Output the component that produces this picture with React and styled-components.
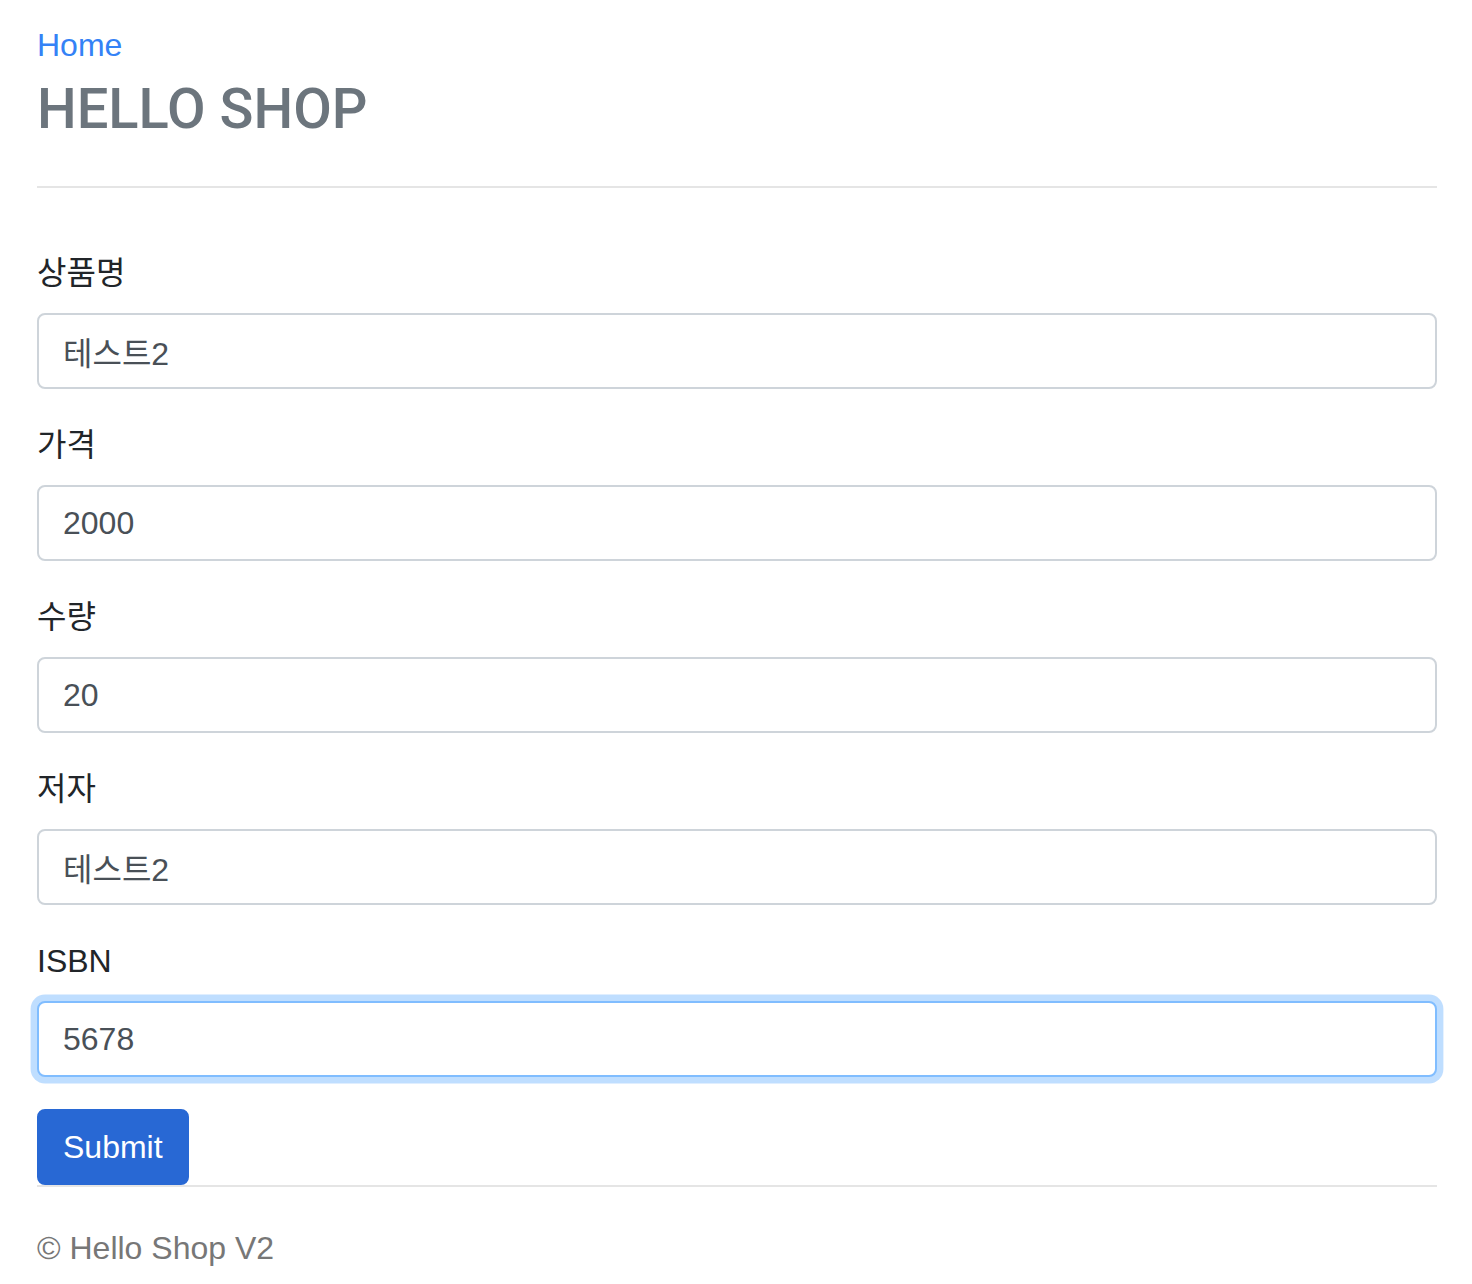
import React, { useEffect, useRef } from "react";
import styled, { createGlobalStyle, css } from "styled-components";

const GlobalStyle = createGlobalStyle`
  html, body {
    margin: 0;
    padding: 0;
    background: #ffffff;
  }
  body {
    font-family: "Liberation Sans", "Noto Sans CJK KR", sans-serif;
    font-size: 32px;
    line-height: 48px;
    color: #212529;
  }
  * { box-sizing: border-box; }
`;

const Container = styled.div`
  width: 1400px;
  margin-left: 37px;
  padding-top: 21px;
  padding-bottom: 10px;
`;

const Header = styled.header`
  display: flex;
  flex-direction: column;
  align-items: flex-start;
`;

const HomeLink = styled.a`
  display: block;
  color: #3482f6;
  text-decoration: none;
  font-size: 32px;
  line-height: 48px;
`;

const Title = styled.h3`
  margin: 7px 0 0;
  font-family: Roboto, "Liberation Sans", sans-serif;
  font-size: 56px;
  line-height: 67px;
  font-weight: 500;
  color: #6c757d;
`;

const Rule = styled.hr`
  border: 0;
  border-top: 2px solid #e5e5e5;
  margin: ${(p) => p.$top}px 0 0;
  height: 0;
`;

const Form = styled.form`
  display: flex;
  flex-direction: column;
  align-items: flex-start;
  margin-top: 61px;
`;

const Group = styled.div`
  display: flex;
  flex-direction: column;
  width: 100%;
  margin-bottom: 32px;
`;

const Label = styled.label`
  display: block;
  font-size: 32px;
  line-height: 48px;
  margin-bottom: 16px;
  color: #212529;
`;

const Input = styled.input`
  display: block;
  width: 100%;
  height: 76px;
  padding: 12px 24px;
  font-family: "Liberation Sans", "Noto Sans CJK KR", sans-serif;
  font-size: 32px;
  line-height: 48px;
  color: #495057;
  background: #ffffff;
  border: 2px solid #ced4da;
  border-radius: 8px;
  outline: none;
  caret-color: #212529;
  ${(p) =>
    p.$focused &&
    css`
      border-color: #80bdff;
      box-shadow: 0 0 0 6.4px rgba(0, 123, 255, 0.25);
    `}
`;

const SubmitButton = styled.button`
  display: inline-block;
  height: 76px;
  padding: 12px 24px;
  font-family: "Liberation Sans", "Noto Sans CJK KR", sans-serif;
  font-size: 32px;
  line-height: 48px;
  color: #ffffff;
  background: #2868d4;
  border: 2px solid #2868d4;
  border-radius: 8px;
  cursor: pointer;
`;

const Footer = styled.footer`
  margin-top: 37px;
  font-size: 32px;
  line-height: 48px;
  color: #777777;
`;

const fields = [
  { id: "itemName", label: "상품명", value: "테스트2" },
  { id: "price", label: "가격", value: "2000" },
  { id: "stockQuantity", label: "수량", value: "20" },
  { id: "author", label: "저자", value: "테스트2" },
  { id: "isbn", label: "ISBN", value: "5678", focused: true },
];

export default function App() {
  const isbnRef = useRef(null);

  useEffect(() => {
    const el = isbnRef.current;
    if (el) {
      el.focus();
      const len = el.value.length;
      el.setSelectionRange(len, len);
    }
  }, []);

  return (
    <>
      <GlobalStyle />
      <Container>
        <Header>
          <HomeLink href="#">Home</HomeLink>
          <Title>HELLO SHOP</Title>
        </Header>
        <Rule $top={43} />
        <Form onSubmit={(e) => e.preventDefault()}>
          {fields.map((f) => (
            <Group key={f.id}>
              <Label htmlFor={f.id}>{f.label}</Label>
              <Input
                id={f.id}
                type="text"
                defaultValue={f.value}
                $focused={f.focused}
                ref={f.focused ? isbnRef : undefined}
              />
            </Group>
          ))}
          <SubmitButton type="submit">Submit</SubmitButton>
        </Form>
        <Rule $top={0} />
        <Footer>© Hello Shop V2</Footer>
      </Container>
    </>
  );
}
